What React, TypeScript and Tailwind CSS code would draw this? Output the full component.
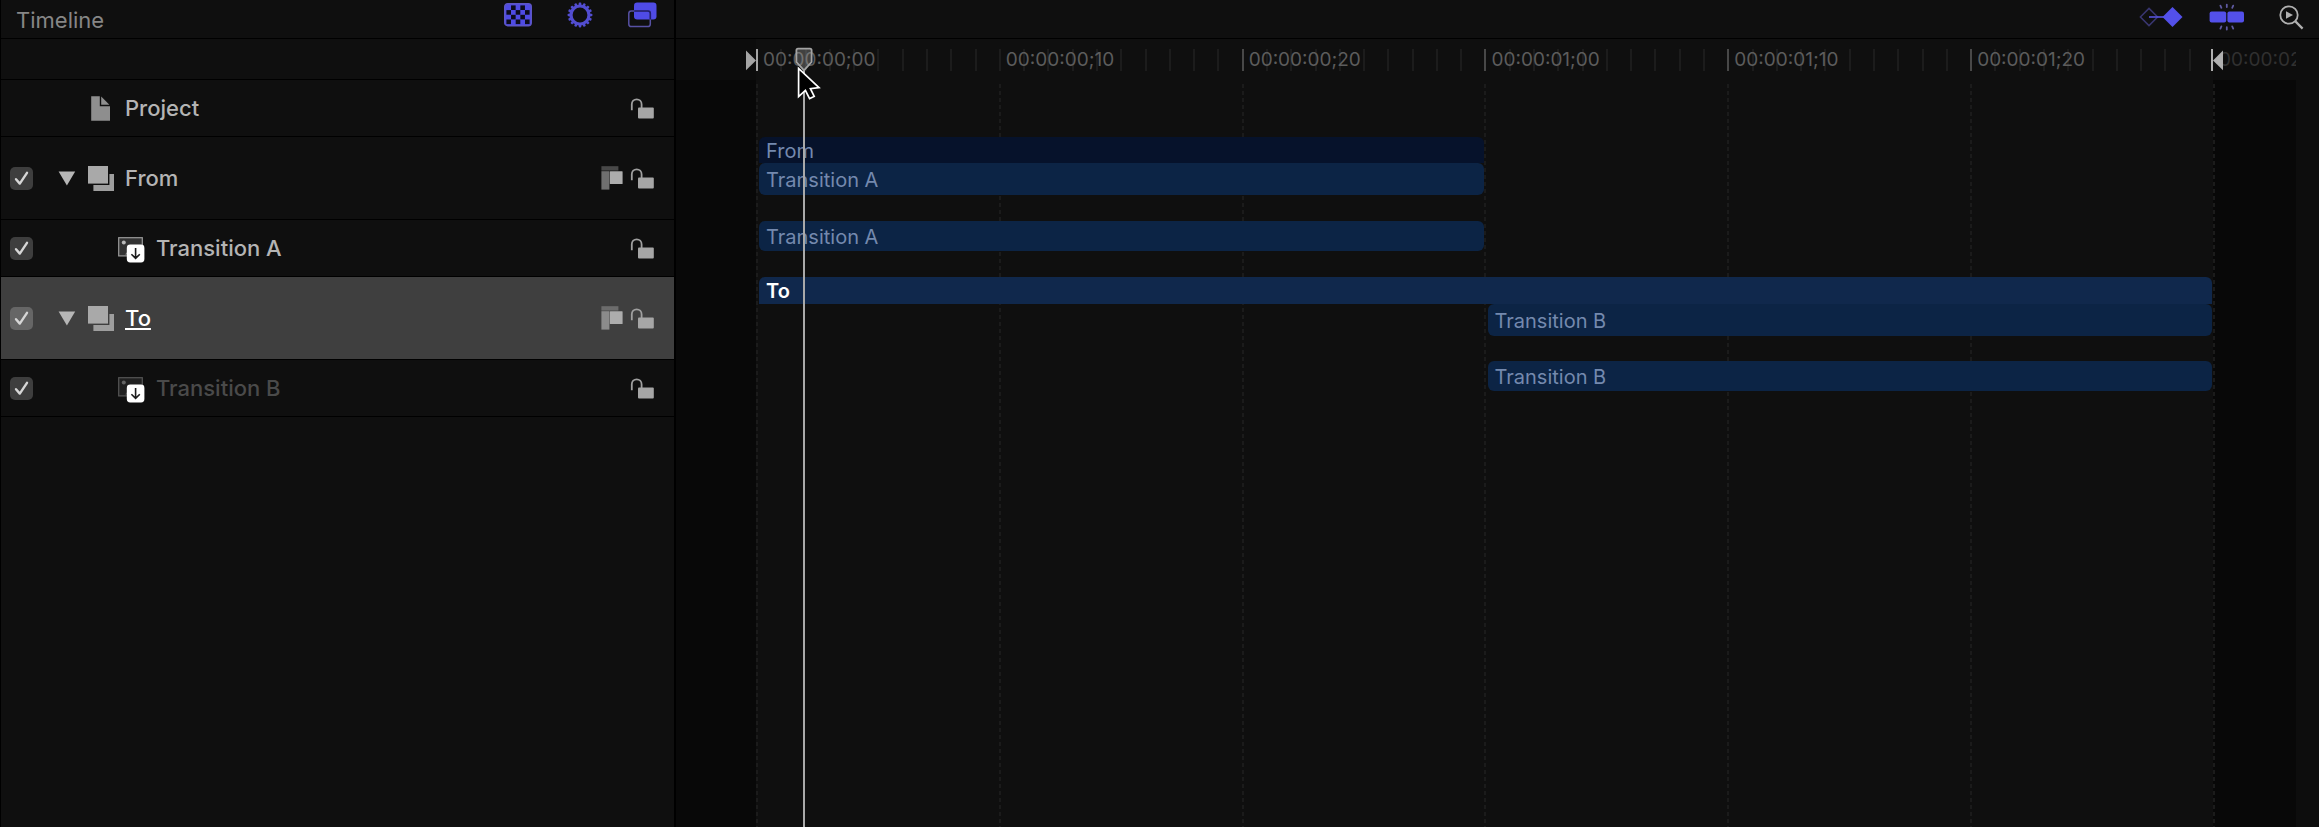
import React, { useState } from "react";

type Kind = "project" | "group" | "clip";

interface Layer {
  id: string;
  name: string;
  kind: Kind;
  dimmed?: boolean;
}

const LAYERS: Layer[] = [
  { id: "project", name: "Project", kind: "project" },
  { id: "from", name: "From", kind: "group" },
  { id: "transition-a", name: "Transition A", kind: "clip" },
  { id: "to", name: "To", kind: "group" },
  { id: "transition-b", name: "Transition B", kind: "clip", dimmed: true },
];

const RULER = [
  { label: "00:00:00;00", faint: true },
  { label: "00:00:00;10", faint: true },
  { label: "00:00:00;20", faint: false },
  { label: "00:00:01;00", faint: false },
  { label: "00:00:01;10", faint: false },
  { label: "00:00:01;20", faint: false },
];

const FRAMES = Array.from({ length: 10 }, (_, i) => i);
const TEETH = Array.from({ length: 16 }, (_, i) => i * 22.5);
const HOLES = Array.from({ length: 20 }, (_, i) => ({ col: i % 5, row: Math.floor(i / 5) })).filter(
  ({ col, row }) => (col + row) % 2 === 1,
);

function CheckerIcon() {
  return (
    <svg width="28" height="24" viewBox="0 0 28 24" aria-hidden="true">
      <rect x="0.7" y="0.7" width="26.6" height="22" rx="3" fill="#4f4be4" stroke="#5d56c4" strokeWidth="1.4" />
      {HOLES.map(({ col, row }) => (
        <rect key={`${col}-${row}`} x={2.4 + col * 4.65} y={2.4 + row * 4.7} width="4.6" height="4.6" fill="#0c0c1c" />
      ))}
    </svg>
  );
}

function GearIcon() {
  return (
    <svg width="26" height="26" viewBox="0 0 26 26" aria-hidden="true">
      <circle cx="13" cy="13" r="9" fill="none" stroke="#524dd0" strokeWidth="3.2" />
      {TEETH.map((a) => (
        <rect key={a} x="11.7" y="0.6" width="2.6" height="3" rx="0.8" fill="#524dd0" transform={`rotate(${a} 13 13)`} />
      ))}
    </svg>
  );
}

function LayersIcon() {
  return (
    <svg width="29" height="26" viewBox="0 0 29 26" aria-hidden="true">
      <rect x="6" y="0.5" width="22.5" height="17" rx="3.2" fill="#4f4be6" />
      <rect x="0.8" y="9" width="21.5" height="15.6" rx="2.6" fill="none" stroke="#5751a4" strokeWidth="1.5" />
      <path d="M6.2 9H20a2.3 2.3 0 0 1 2.3 2.3v6.2" fill="none" stroke="#1f1c6e" strokeWidth="1.6" />
    </svg>
  );
}

function KeyframeIcon() {
  return (
    <svg width="44" height="22" viewBox="0 0 44 22" aria-hidden="true">
      <path d="M10 2.4 18.6 11 10 19.6 1.4 11Z" fill="none" stroke="#393670" strokeWidth="1.5" />
      <path d="M10 11H26" stroke="#5652dc" strokeWidth="1.6" />
      <path d="M33.5 1 43.5 11 33.5 21 23.5 11Z" fill="#5350ea" />
    </svg>
  );
}

function SnapIcon() {
  return (
    <svg width="36" height="28" viewBox="0 0 36 28" aria-hidden="true">
      <rect x="0.6" y="8.6" width="16.6" height="11" rx="2" fill="#5350ea" />
      <rect x="18.4" y="8.6" width="16.6" height="11" rx="2" fill="#5350ea" />
      <g stroke="#5f5aa2" strokeWidth="1.8" strokeLinecap="round">
        <path d="M17.8 1.6V4M11.4 2.6l1 2.2M24.2 2.6 23.2 4.8" />
        <path d="M17.8 26.6V24.2M11.4 25.6l1-2.2M24.2 25.6 23.2 23.4" />
      </g>
    </svg>
  );
}

function ZoomIcon() {
  return (
    <svg width="25" height="25" viewBox="0 0 25 25" aria-hidden="true">
      <circle cx="10" cy="10" r="8.7" fill="none" stroke="#b0b0b0" strokeWidth="1.8" />
      <path d="M16.4 16.4 23.6 23.6" stroke="#b0b0b0" strokeWidth="2.2" />
      <path d="M7 6.2 14 10 7 13.8Z" fill="#b0b0b0" />
    </svg>
  );
}

function LockIcon() {
  return (
    <svg width="24" height="21" viewBox="0 0 24 21" aria-hidden="true">
      <path d="M1.8 12.2V6.2a4.9 4.9 0 0 1 9.8 0V10" fill="none" stroke="#a0a0a0" strokeWidth="1.8" />
      <rect x="8" y="9.4" width="15.8" height="11" rx="1" fill="#a6a6a6" />
    </svg>
  );
}

function PassThroughIcon() {
  return (
    <svg width="22" height="24" viewBox="0 0 22 24" aria-hidden="true">
      <rect x="0.4" y="0.2" width="17" height="4.4" fill="#fff" fillOpacity="0.24" />
      <rect x="0.4" y="5.2" width="8" height="18.4" fill="#fff" fillOpacity="0.4" />
      <rect x="8.8" y="5.2" width="12.8" height="12.8" rx="0.6" fill="#adadad" />
    </svg>
  );
}

function DocumentIcon() {
  return (
    <svg width="26" height="25" viewBox="0 0 26 25" aria-hidden="true">
      <path d="M3.2 0.2H11.8V10.2H22V24.8H3.2Z" fill="#8e8e8e" />
      <path d="M13.2 0.6 21.4 8.8H13.2Z" fill="#8e8e8e" />
    </svg>
  );
}

function GroupIcon() {
  return (
    <svg width="26" height="25" viewBox="0 0 26 25" aria-hidden="true">
      <path d="M0 0H20V17.6H0Z" fill="#a9a9a9" />
      <path d="M21.4 8H26V25H5.4V19H21.4Z" fill="#9e9e9e" />
    </svg>
  );
}

function ClipIcon({ dimmed }: { dimmed?: boolean }) {
  return (
    <svg width="27" height="26" viewBox="0 0 27 26" aria-hidden="true">
      <g opacity={dimmed ? 0.5 : 1}>
        <rect x="0.7" y="0.7" width="23.6" height="18.2" fill="#323232" stroke="#9a9a9a" strokeWidth="1.2" />
        <circle cx="5.8" cy="5.6" r="2" fill="#b8b8b8" />
        <path d="M7 17.6 11 13V17.6Z" fill="#8a8a8a" />
      </g>
      <rect x="8.8" y="7.6" width="17.6" height="17.8" rx="3.4" fill="#fff" />
      <path d="M17.6 11V21M13.4 17.2 17.6 21.4 21.8 17.2" fill="none" stroke="#1c1c1c" strokeWidth="1.6" />
    </svg>
  );
}

function IconButton({ label, children }: { label: string; children: React.ReactNode }) {
  return (
    <button type="button" aria-label={label} className="flex items-center justify-center">
      {children}
    </button>
  );
}

function LayerRow({
  layer,
  selected,
  onSelect,
}: {
  layer: Layer;
  selected: boolean;
  onSelect: () => void;
}) {
  const height = layer.kind === "group" ? "h-[83px]" : "h-[57px]";
  const text = selected
    ? "text-white underline underline-offset-2"
    : layer.dimmed
      ? "text-[#4a4a4a]"
      : "text-[#b4b4b4]";
  return (
    <li
      onClick={onSelect}
      className={`${height} ${selected ? "bg-[#3f3f3f]" : ""} flex items-center border-b border-black pl-[9px] pr-5`}
    >
      <span className="grid w-12 shrink-0 items-center">
        {layer.kind !== "project" && (
          <>
            <input
              id={layer.id}
              type="checkbox"
              defaultChecked
              className={`${selected ? "bg-[#666666]" : "bg-[#3e3e3e]"} peer col-start-1 row-start-1 size-[23px] appearance-none rounded-[5px]`}
            />
            <svg
              width="23"
              height="23"
              viewBox="0 0 23 23"
              aria-hidden="true"
              className="pointer-events-none invisible col-start-1 row-start-1 peer-checked:visible"
            >
              <path d="M6 12.2 9.8 16.6 17 5.8" fill="none" stroke="#d6d6d6" strokeWidth="2.4" strokeLinecap="round" strokeLinejoin="round" />
            </svg>
          </>
        )}
      </span>
      <span className="flex w-[30px] shrink-0 items-center">
        {layer.kind === "group" && (
          <button type="button" aria-label={`Collapse ${layer.name}`}>
            <svg width="18" height="15" viewBox="0 0 18 15" aria-hidden="true">
              <path d="M0.6 0.4H17.2L8.9 14.6Z" fill="#b6b6b6" />
            </svg>
          </button>
        )}
      </span>
      <span className={layer.kind === "clip" ? "ml-[30px] mt-1" : ""}>
        {layer.kind === "project" && <DocumentIcon />}
        {layer.kind === "group" && <GroupIcon />}
        {layer.kind === "clip" && <ClipIcon dimmed={layer.dimmed} />}
      </span>
      <label
        htmlFor={layer.kind === "project" ? undefined : layer.id}
        className={`${text} ml-[11px] flex-1 truncate text-[22px] leading-7 font-medium`}
      >
        {layer.name}
      </label>
      <span className="flex items-center gap-[7px]">
        {layer.kind === "group" && (
          <IconButton label={`Pass through ${layer.name}`}>
            <PassThroughIcon />
          </IconButton>
        )}
        <IconButton label={`Lock ${layer.name}`}>
          <LockIcon />
        </IconButton>
      </span>
    </li>
  );
}

const BAR = "ml-[3px] mr-px flex items-center truncate px-[7px] pt-px text-[20px] leading-6";
const CLIP = "rounded-md bg-[#0c2445] text-[#7489ae]";

function Tracks() {
  return (
    <div className="relative pt-[57px]">
      <div className="h-[83px]">
        <div className="grid grid-cols-2">
          <div className={`${BAR} h-[26px] rounded-t-md bg-[#06122b] text-[#7489ae]`}>From</div>
        </div>
        <div className="grid grid-cols-2">
          <div className={`${BAR} ${CLIP} h-8`}>Transition A</div>
        </div>
      </div>
      <div className="grid h-[57px] grid-cols-2 pt-px">
        <div className={`${BAR} ${CLIP} h-[30px]`}>Transition A</div>
      </div>
      <div className="h-[83px]">
        <div className={`${BAR} h-[27px] rounded-t-md bg-[#10284c] font-semibold text-white`}>To</div>
        <div className="grid grid-cols-2">
          <div className={`${BAR} ${CLIP} col-start-2 h-8`}>Transition B</div>
        </div>
      </div>
      <div className="grid h-[57px] grid-cols-2 pt-px">
        <div className={`${BAR} ${CLIP} col-start-2 h-[30px]`}>Transition B</div>
      </div>
    </div>
  );
}

function Playhead() {
  return (
    <div className="pointer-events-none absolute inset-y-0 left-[3.3%] z-10 w-0">
      <div className="absolute top-8 bottom-0 -left-px w-0.5 bg-[#a9a9a9]" />
      <svg width="34" height="56" viewBox="0 0 34 56" className="absolute top-2 -left-[9px] max-w-none" aria-hidden="true">
        <path d="M1.4 3.2Q1.4 1.6 3 1.6H15Q16.6 1.6 16.6 3.2V15L9 23.4 1.4 15Z" fill="#9a9a9a" fillOpacity="0.36" stroke="#a4a4a4" strokeWidth="1.8" />
        <path d="M3.6 21.4V49.6L10.4 43.4 14.6 51.6 19.2 49.4 15.4 41.6 24 40.6Z" fill="#000" stroke="#fff" strokeWidth="1.7" strokeLinejoin="miter" />
      </svg>
    </div>
  );
}

export default function App() {
  const [selected, setSelected] = useState("to");

  return (
    <main className="grid min-h-screen grid-cols-[minmax(0,676fr)_minmax(0,1643fr)] bg-[#0f0f0f] font-['Inter','Liberation_Sans',sans-serif]">
      <section className="border-r-2 border-l border-black" aria-label="Layers">
        <header className="flex h-[39px] items-center border-b border-black pr-[17px] pl-[15px]">
          <h1 className="flex-1 pt-0.5 text-[22px] leading-7 text-[#868686]">Timeline</h1>
          <div className="flex items-center gap-[35px] pb-2">
            <IconButton label="Show masks">
              <CheckerIcon />
            </IconButton>
            <IconButton label="Show behaviors">
              <GearIcon />
            </IconButton>
            <IconButton label="Show layers">
              <LayersIcon />
            </IconButton>
          </div>
        </header>
        <div className="h-[41px] border-b border-black" />
        <ul>
          {LAYERS.map((layer) => (
            <LayerRow
              key={layer.id}
              layer={layer}
              selected={selected === layer.id}
              onSelect={() => setSelected(layer.id)}
            />
          ))}
        </ul>
      </section>

      <section className="flex flex-col" aria-label="Tracks">
        <header className="flex h-[39px] shrink-0 items-center justify-end border-b border-black pr-[15px] pb-1">
          <div className="flex items-center">
            <IconButton label="Show keyframes">
              <KeyframeIcon />
            </IconButton>
            <span className="w-[26px]" />
            <IconButton label="Snapping">
              <SnapIcon />
            </IconButton>
            <span className="w-[34px]" />
            <IconButton label="Zoom to fit">
              <ZoomIcon />
            </IconButton>
          </div>
        </header>

        <div className="grid flex-1 grid-cols-[80px_minmax(0,1fr)_83px_23px]">
          <div className="flex flex-col">
            <div className="h-[41px] bg-[#0c0c0c]" />
            <div className="flex-1 bg-[#080808]" />
          </div>

          <div className="relative flex flex-col">
            <div className="flex h-[41px] shrink-0 items-start pt-2.5">
              {RULER.map((mark, m) => (
                <div key={mark.label} className="relative flex h-[22px] flex-1">
                  {FRAMES.map((f) => (
                    <span
                      key={f}
                      className={`flex-1 border-l-2 ${f === 0 && !mark.faint ? "border-[#484848]" : "border-[#1c1c1c]"}`}
                    />
                  ))}
                  <span className="absolute inset-y-0 left-[7px] flex items-center text-[19px] leading-5 text-[#5c5c5c]">
                    {mark.label}
                  </span>
                  {m === 0 && (
                    <svg width="12" height="22" viewBox="0 0 12 22" className="absolute top-0 -left-2.5" aria-hidden="true">
                      <path d="M0 1.6 10 11.4 0 21.2Z" fill="#a4a4a4" />
                      <rect x="10" width="2" height="22" fill="#a4a4a4" />
                    </svg>
                  )}
                  {m === RULER.length - 1 && (
                    <svg width="12" height="22" viewBox="0 0 12 22" className="absolute top-0 -right-2.5 z-10" aria-hidden="true">
                      <rect width="2" height="22" fill="#b0b0b0" />
                      <path d="M12 1.6 2 11.4 12 21.2Z" fill="#b0b0b0" />
                    </svg>
                  )}
                </div>
              ))}
            </div>
            <div className="relative flex-1">
              <div className="absolute inset-x-0 top-1 bottom-0 flex" aria-hidden="true">
                {RULER.map((mark) => (
                  <span key={mark.label} className="flex-1">
                    <span className="block h-full w-0.5 bg-[repeating-linear-gradient(to_bottom,#1b1b1b_0_4px,transparent_4px_7px)]" />
                  </span>
                ))}
                <span className="w-0">
                  <span className="block h-full w-0.5 bg-[repeating-linear-gradient(to_bottom,#1b1b1b_0_4px,transparent_4px_7px)]" />
                </span>
              </div>
              <Tracks />
            </div>
            <Playhead />
          </div>

          <div className="flex flex-col overflow-hidden">
            <div className="h-[41px] overflow-hidden bg-[#0d0d0d] pt-[11px] pl-1.5 text-[19px] leading-5 whitespace-nowrap text-[#303030]">
              00:00:02;00
            </div>
            <div className="flex-1 bg-[#080808]" />
          </div>
          <div className="bg-[#0d0d0d]" />
        </div>
      </section>
    </main>
  );
}
